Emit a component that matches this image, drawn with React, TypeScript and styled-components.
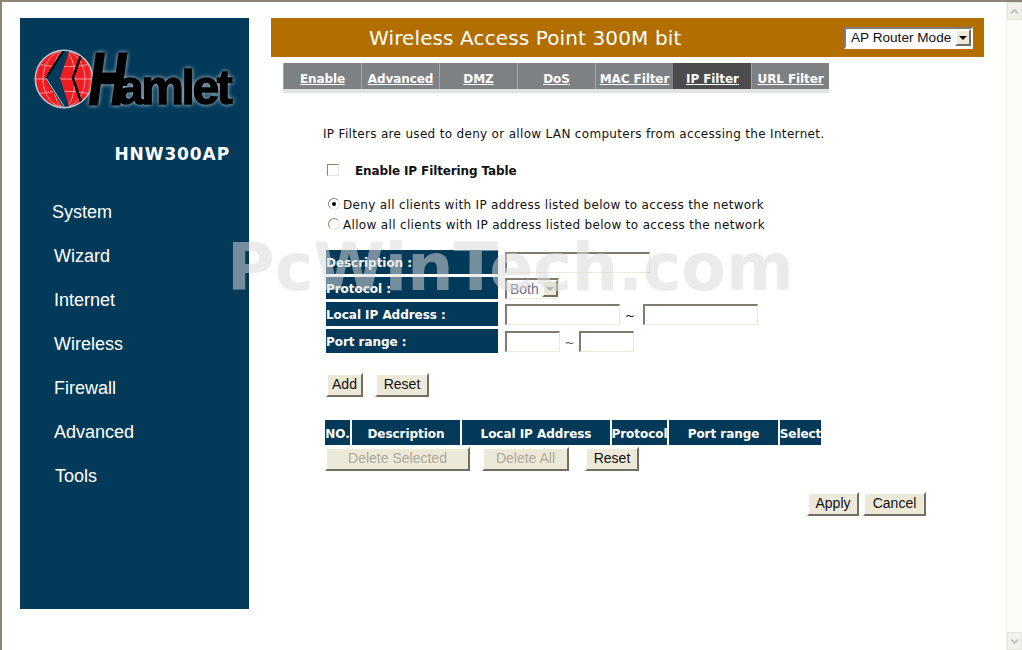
import React from "react";
import styled, { createGlobalStyle } from "styled-components";

const GlobalStyle = createGlobalStyle`
  html, body {
    margin: 0;
    padding: 0;
    overflow: hidden;
    background: #fff;
  }
`;

const navItems = [
  { label: "System", shift: -2 },
  { label: "Wizard", shift: 0 },
  { label: "Internet", shift: 0 },
  { label: "Wireless", shift: 0 },
  { label: "Firewall", shift: 0 },
  { label: "Advanced", shift: 0 },
  { label: "Tools", shift: 1 },
];

const tabs = ["Enable", "Advanced", "DMZ", "DoS", "MAC Filter", "IP Filter", "URL Filter"];

const columns = [
  { label: "NO.", width: 25 },
  { label: "Description", width: 108 },
  { label: "Local IP Address", width: 148 },
  { label: "Protocol", width: 55 },
  { label: "Port range", width: 109 },
  { label: "Select", width: 41 },
];

const Globe = () => (
  <svg width="60" height="60" viewBox="0 0 60 60">
    <defs>
      <clipPath id="ball">
        <circle cx="30" cy="30" r="28" />
      </clipPath>
    </defs>
    <circle cx="30" cy="30" r="29.5" fill="#b9c9d2" />
    <g clipPath="url(#ball)">
      <rect width="60" height="60" fill="#f01c24" />
      <g stroke="#ffb4b4" strokeWidth="0.8" fill="none">
        <ellipse cx="30" cy="30" rx="11" ry="28" />
        <ellipse cx="30" cy="30" rx="21" ry="28" />
        <path d="M0 14C15 19 45 19 60 14M0 30H60M0 46C15 41 45 41 60 46" />
      </g>
      <path d="M29 0L11 29L30 60H36L26 29L36 0Z" fill="#033a59" />
      <path d="M30 1L12 29" stroke="#000" strokeWidth="2" fill="none" />
      <path d="M12 29L31 59" stroke="#b9c9d2" strokeWidth="1" fill="none" />
      <path d="M47 6L39 29L47 53" stroke="#0a0a0a" strokeWidth="2.5" fill="none" />
    </g>
  </svg>
);

const ChevronIcon = ({ up }: { up?: boolean }) => (
  <svg width="9" height="7" viewBox="0 0 9 7">
    <path
      d={up ? "M1 5.5L4.5 2L8 5.5" : "M1 1.5L4.5 5L8 1.5"}
      stroke="#c4c4bc"
      strokeWidth="2"
      fill="none"
    />
  </svg>
);

const App = () => {
  return (
    <>
      <GlobalStyle />
      <Screen>
        <Page>
          <Sidebar>
            <Logo>
              <Globe />
              <LogoWord>
                <LogoCap>H</LogoCap>
                <LogoRest>amlet</LogoRest>
              </LogoWord>
            </Logo>
            <Model>HNW300AP</Model>
            <Nav>
              {navItems.map((item) => (
                <NavItem key={item.label} $shift={item.shift}>
                  {item.label}
                </NavItem>
              ))}
            </Nav>
          </Sidebar>

          <Main>
            <Header>
              <HeaderTitle>Wireless Access Point 300M bit</HeaderTitle>
              <ModeSelect>
                <ModeValue>AP Router Mode</ModeValue>
                <SelectArrow />
              </ModeSelect>
            </Header>

            <TabBar>
              {tabs.map((tab) => (
                <Tab key={tab} $active={tab === "IP Filter"}>
                  <TabLabel>{tab}</TabLabel>
                </Tab>
              ))}
            </TabBar>

            <Content>
              <Intro>IP Filters are used to deny or allow LAN computers from accessing the Internet.</Intro>

              <EnableRow>
                <CheckBox type="checkbox" />
                <EnableLabel>Enable IP Filtering Table</EnableLabel>
              </EnableRow>

              <RadioGroup>
                <RadioRow>
                  <RadioDot $checked />
                  Deny all clients with IP address listed below to access the network
                </RadioRow>
                <RadioRow>
                  <RadioDot />
                  Allow all clients with IP address listed below to access the network
                </RadioRow>
              </RadioGroup>

              <FieldTable>
                <FieldRow $height={24}>
                  <FieldLabel>Description :</FieldLabel>
                  <TextBox $width={145} />
                </FieldRow>
                <FieldRow $height={22}>
                  <FieldLabel>Protocol :</FieldLabel>
                  <ProtocolSelect>
                    <ProtocolValue>Both</ProtocolValue>
                    <SelectArrow $disabled />
                  </ProtocolSelect>
                </FieldRow>
                <FieldRow $height={24}>
                  <FieldLabel>Local IP Address :</FieldLabel>
                  <TextBox $width={115} />
                  <Tilde $width={23}>~</Tilde>
                  <TextBox $width={115} />
                </FieldRow>
                <FieldRow $height={24}>
                  <FieldLabel>Port range :</FieldLabel>
                  <TextBox $width={55} />
                  <Tilde $width={19} $faint>
                    ~
                  </Tilde>
                  <TextBox $width={55} />
                </FieldRow>
              </FieldTable>

              <AddRow>
                <ActionButton $width={37}>Add</ActionButton>
                <ActionButton $width={54}>Reset</ActionButton>
              </AddRow>

              <RuleHead>
                {columns.map((col) => (
                  <RuleCell key={col.label} $width={col.width}>
                    {col.label}
                  </RuleCell>
                ))}
              </RuleHead>

              <RuleButtons>
                <ActionButton $width={145} disabled>
                  Delete Selected
                </ActionButton>
                <ActionButton $width={87} $gap={12} disabled>
                  Delete All
                </ActionButton>
                <ActionButton $width={54} $gap={16}>
                  Reset
                </ActionButton>
              </RuleButtons>

              <ApplyRow>
                <ActionButton $width={52}>Apply</ActionButton>
                <ActionButton $width={63}>Cancel</ActionButton>
              </ApplyRow>
            </Content>
          </Main>
        </Page>

        <Scrollbar>
          <ScrollButton>
            <ChevronIcon up />
          </ScrollButton>
          <ScrollButton>
            <ChevronIcon />
          </ScrollButton>
        </Scrollbar>

        <Watermark>PcWinTech.com</Watermark>
      </Screen>
    </>
  );
};

export default App;

const Screen = styled.div`
  position: relative;
  box-sizing: border-box;
  display: flex;
  width: 1022px;
  height: 650px;
  overflow: hidden;
  border-top: 2px solid #8a8778;
  border-left: 2px solid #8a8778;
  background: #fff;
  color: #111;
  font-family: "DejaVu Sans", Verdana, sans-serif;
  font-size: 12px;
`;

const Page = styled.div`
  flex: 1;
  display: flex;
  align-items: flex-start;
  gap: 22px;
  padding: 16px 0 0 18px;
`;

const Sidebar = styled.aside`
  box-sizing: border-box;
  flex: none;
  width: 229px;
  height: 591px;
  padding-top: 31px;
  background: #033a59;
`;

const Logo = styled.div`
  display: flex;
  align-items: flex-start;
  padding-left: 14px;
`;

const LogoWord = styled.div`
  display: flex;
  align-items: baseline;
  margin-left: -5px;
  height: 60px;
  color: #000;
  font-family: "Liberation Sans", Arial, sans-serif;
  font-weight: 700;
  filter: drop-shadow(0 0 2px #c6d4dc);
`;

const LogoCap = styled.span`
  display: inline-block;
  width: 36px;
  font-size: 72px;
  line-height: 60px;
  font-style: italic;
  transform: scaleX(0.7);
  transform-origin: left;
  -webkit-text-stroke: 3px #000;
`;

const LogoRest = styled.span`
  margin-left: -8px;
  font-size: 48px;
  line-height: 60px;
  letter-spacing: -2.4px;
  -webkit-text-stroke: 1.4px #000;
`;

const Model = styled.div`
  margin-top: 35px;
  padding-right: 19px;
  text-align: right;
  color: #fff;
  font-size: 17px;
  font-weight: 700;
  letter-spacing: 0.9px;
  line-height: 20px;
`;

const Nav = styled.nav`
  display: flex;
  flex-direction: column;
  gap: 22px;
  margin-top: 37px;
`;

const NavItem = styled.div<{ $shift: number }>`
  margin-left: ${(p) => 34 + p.$shift}px;
  color: #fff;
  font-family: "Liberation Sans", Arial, sans-serif;
  font-size: 18px;
  line-height: 22px;
`;

const Main = styled.main`
  display: flex;
  flex-direction: column;
  width: 713px;
`;

const Header = styled.header`
  box-sizing: border-box;
  display: flex;
  align-items: center;
  justify-content: space-between;
  height: 39px;
  padding: 0 11px 0 98px;
  background: #b26f00;
`;

const HeaderTitle = styled.h1`
  margin: 0;
  color: #fff;
  font-size: 20px;
  font-weight: 400;
  letter-spacing: 0.12px;
`;

const ModeSelect = styled.div`
  box-sizing: border-box;
  display: flex;
  align-items: center;
  justify-content: space-between;
  flex: none;
  width: 129px;
  height: 22px;
  padding: 0 0 0 5px;
  border: 2px solid;
  border-color: #7f7c6f #fff #fff #7f7c6f;
  background: #fff;
`;

const ModeValue = styled.span`
  color: #111;
  font-family: "Liberation Sans", Arial, sans-serif;
  font-size: 13.6px;
  white-space: nowrap;
`;

const SelectArrow = styled.span<{ $disabled?: boolean }>`
  position: relative;
  box-sizing: border-box;
  flex: none;
  width: 16px;
  height: 17px;
  border: 2px solid;
  border-color: #fff #716f64 #716f64 #fff;
  background: #ece9d8;

  &::after {
    content: "";
    position: absolute;
    left: 2px;
    top: 5px;
    border-style: solid;
    border-width: 4px 4px 0;
    border-color: ${(p) => (p.$disabled ? "#8f8d80" : "#000")} transparent transparent;
  }
`;

const TabBar = styled.nav`
  display: flex;
  width: 546px;
  margin: 6px 0 0 12px;
  border-bottom: 4px solid #e2e4e4;
`;

const Tab = styled.div<{ $active?: boolean }>`
  box-sizing: border-box;
  display: flex;
  align-items: center;
  justify-content: center;
  width: 78px;
  height: 26px;
  padding-top: 5px;
  border-left: 1px solid ${(p) => (p.$active ? "#4c4c4e" : "#a5a8aa")};
  background: ${(p) => (p.$active ? "#4c4c4e" : "#7e8184")};
`;

const TabLabel = styled.span`
  color: #fff;
  font-size: 12px;
  font-weight: 700;
  letter-spacing: -0.1px;
  text-decoration: underline;
  white-space: nowrap;
`;

const Content = styled.div`
  display: flex;
  flex-direction: column;
  align-items: flex-start;
  padding: 33px 0 0 52px;
`;

const Intro = styled.p`
  margin: 0;
  line-height: 16px;
  letter-spacing: 0.32px;
`;

const EnableRow = styled.div`
  display: flex;
  align-items: center;
  margin: 21px 0 0 4px;
  height: 16px;
`;

const CheckBox = styled.input`
  appearance: none;
  box-sizing: border-box;
  flex: none;
  width: 12px;
  height: 12px;
  margin: 0 16px 2px 0;
  border: 1px solid;
  border-color: #8a8778 #e8e6da #e8e6da #8a8778;
  background: #fff;
`;

const EnableLabel = styled.span`
  font-weight: 700;
  letter-spacing: -0.12px;
`;

const RadioGroup = styled.div`
  display: flex;
  flex-direction: column;
  gap: 4px;
  margin: 18px 0 0 5px;
`;

const RadioRow = styled.div`
  display: flex;
  align-items: center;
  gap: 3px;
  line-height: 16px;
  letter-spacing: 0.33px;
`;

const RadioDot = styled.span<{ $checked?: boolean }>`
  box-sizing: border-box;
  flex: none;
  display: flex;
  align-items: center;
  justify-content: center;
  width: 12px;
  height: 12px;
  margin-bottom: 2px;
  border-radius: 50%;
  border: 1px solid;
  border-color: #8a8778 #e4e2d6 #e4e2d6 #8a8778;
  background: #fff;

  &::after {
    content: "";
    display: ${(p) => (p.$checked ? "block" : "none")};
    width: 4px;
    height: 4px;
    border-radius: 50%;
    background: #000;
  }
`;

const FieldTable = styled.div`
  display: flex;
  flex-direction: column;
  gap: 3px;
  margin: 17px 0 0 3px;
`;

const FieldRow = styled.div<{ $height: number }>`
  display: flex;
  align-items: center;
  height: ${(p) => p.$height}px;
`;

const FieldLabel = styled.div`
  box-sizing: border-box;
  display: flex;
  align-items: center;
  align-self: stretch;
  flex: none;
  width: 172px;
  margin-right: 7px;
  padding-top: 2px;
  background: #033a59;
  color: #fff;
  font-size: 12px;
  font-weight: 700;
  letter-spacing: -0.05px;
`;

const TextBox = styled.input.attrs({ type: "text" })<{ $width: number }>`
  box-sizing: border-box;
  flex: none;
  width: ${(p) => p.$width}px;
  height: 21px;
  margin: 0;
  padding: 0;
  border: 1px solid #ece9d8;
  border-top: 2px solid #7f7c6f;
  border-left: 2px solid #7f7c6f;
  background: transparent;
  outline: none;
`;

const Tilde = styled.span<{ $width: number; $faint?: boolean }>`
  box-sizing: border-box;
  width: ${(p) => p.$width}px;
  padding: 4px ${(p) => (p.$faint ? 0 : 3)}px 0 0;
  text-align: center;
  color: ${(p) => (p.$faint ? "#555" : "#111")};
  font-size: 12px;
`;

const ProtocolSelect = styled.div`
  box-sizing: border-box;
  display: flex;
  align-items: center;
  justify-content: space-between;
  width: 54px;
  height: 21px;
  padding: 0 0 0 3px;
  border: 1px solid #ece9d8;
  border-top: 2px solid #7f7c6f;
  border-left: 2px solid #7f7c6f;
`;

const ProtocolValue = styled.span`
  color: #6f6d80;
  font-family: "Liberation Sans", Arial, sans-serif;
  font-size: 14px;
`;

const ActionButton = styled.button<{ $width: number; $gap?: number }>`
  box-sizing: border-box;
  flex: none;
  width: ${(p) => p.$width}px;
  height: 24px;
  margin: 0 0 0 ${(p) => p.$gap ?? 0}px;
  padding: 0 0 2px;
  border: 2px solid;
  border-color: #fff #716f64 #716f64 #fff;
  background: #ece9d8;
  color: #111;
  font-family: "Liberation Sans", Arial, sans-serif;
  font-size: 14px;

  &:disabled {
    color: #aca899;
  }
`;

const AddRow = styled.div`
  display: flex;
  gap: 12px;
  margin: 20px 0 0 3px;
`;

const RuleHead = styled.div`
  display: flex;
  gap: 2px;
  margin: 23px 0 0 2px;
`;

const RuleCell = styled.div<{ $width: number }>`
  box-sizing: border-box;
  display: flex;
  align-items: center;
  justify-content: center;
  flex: none;
  width: ${(p) => p.$width}px;
  height: 25px;
  padding-top: 2px;
  overflow: hidden;
  background: #033a59;
  color: #fff;
  font-size: 12px;
  font-weight: 700;
  letter-spacing: -0.05px;
  white-space: nowrap;
`;

const RuleButtons = styled.div`
  display: flex;
  margin: 2px 0 0 2px;
`;

const ApplyRow = styled.div`
  display: flex;
  gap: 4px;
  margin: 21px 0 0 484px;
`;

const Scrollbar = styled.div`
  box-sizing: border-box;
  flex: none;
  display: flex;
  flex-direction: column;
  justify-content: space-between;
  width: 16px;
  margin-left: auto;
  border-left: 1px solid #f1f0e8;
  background: #fcfcf9;
`;

const ScrollButton = styled.div`
  display: flex;
  align-items: center;
  justify-content: center;
  height: 16px;
  background: #f1f1ec;
  border: 1px solid #e6e6de;
`;

const Watermark = styled.div`
  position: absolute;
  left: 225px;
  top: 228px;
  color: rgba(217, 217, 217, 0.53);
  font-size: 65px;
  font-weight: 700;
  line-height: 76px;
  white-space: nowrap;
  pointer-events: none;
`;
